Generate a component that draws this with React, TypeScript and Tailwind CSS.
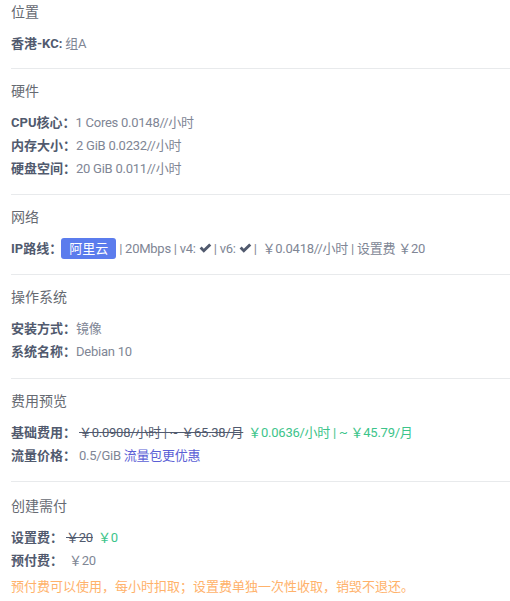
import React from 'react';

const font = { fontFamily: 'Roboto, "Noto Sans CJK SC", sans-serif' };

const Check: React.FC = () => (
  <svg viewBox="0 0 16 16" className="inline-block w-[14px] h-[14px] mx-[2px] align-[-2px]" fill="#515a6e">
    <path d="M1.8 8.6 L4.2 6.4 L6.6 8.8 L12.8 2.8 L15.2 5 L6.6 13.4 Z" />
  </svg>
);

const Row: React.FC<{ label: string; children: React.ReactNode }> = ({ label, children }) => (
  <div className="leading-[23px] text-[13px] text-[#808695]">
    <span className="font-bold text-[#515a6e]">{label}</span>
    <span className="tracking-[-0.25px]">{children}</span>
  </div>
);

const Section: React.FC<{ title: string; first?: boolean; pt?: string; pb?: string; children: React.ReactNode }> = ({
  title,
  first,
  pt = 'pt-[10px]',
  pb = 'pb-[14px]',
  children,
}) => (
  <div className={`${pb} ${first ? '' : `border-t border-[#e8eaec] ${pt}`}`}>
    <div className="text-[14px] leading-[24px] text-[#666a72] mb-[8px]">{title}</div>
    {children}
  </div>
);

export default function App() {
  return (
    <div className="bg-white w-[510px] h-[601px] pl-[11px] overflow-hidden" style={font}>
      <Section title="位置" first pb="pb-[13px]">
        <Row label="香港-KC:">&nbsp;组A</Row>
      </Section>

      <Section title="硬件">
        <Row label="CPU核心：">1 Cores 0.0148//小时</Row>
        <Row label="内存大小：">2 GiB 0.0232//小时</Row>
        <Row label="硬盘空间：">20 GiB 0.011//小时</Row>
      </Section>

      <Section title="网络">
        <div className="flex items-center text-[13px] text-[#808695] h-[23px]">
          <span className="font-bold text-[#515a6e] mr-[-1px]">IP路线：</span>
          <span className="bg-[#5b7ced] text-white text-[13px] rounded-[3px] px-[8px] h-[21px] leading-[21px] mr-[3px]">阿里云</span>
          <span className="tracking-[-0.25px]">| 20Mbps | v4:<Check />| v6:<Check />|&nbsp; ￥0.0418//小时 | 设置费 ￥20</span>
        </div>
      </Section>

      <Section title="操作系统" pb="pb-[15px]">
        <Row label="安装方式：">镜像</Row>
        <Row label="系统名称：">Debian 10</Row>
      </Section>

      <Section title="费用预览">
        <Row label="基础费用：">
          <span className="ml-[3px] line-through text-[#515a6e]">￥0.0908/小时 | ~ ￥65.38/月</span>
          <span className="ml-[5px] text-[#3cc48a]">￥0.0636/小时 | ~ ￥45.79/月</span>
        </Row>
        <Row label="流量价格：">
          <span className="ml-[3px]">0.5/GiB </span>
          <span className="text-[#5b5fd6]">流量包更优惠</span>
        </Row>
      </Section>

      <Section title="创建需付" pt="pt-[12px]">
        <Row label="设置费：">
          <span className="ml-[3px] line-through text-[#515a6e]">￥20</span>
          <span className="ml-[5px] text-[#3cc48a]">￥0</span>
        </Row>
        <Row label="预付费：">
          <span className="ml-[6px]">￥20</span>
        </Row>
        <div className="text-[13px] leading-[23px] mt-[3px] text-[#ffb26b]">
          预付费可以使用，每小时扣取；设置费单独一次性收取，销毁不退还。
        </div>
      </Section>
    </div>
  );
}
